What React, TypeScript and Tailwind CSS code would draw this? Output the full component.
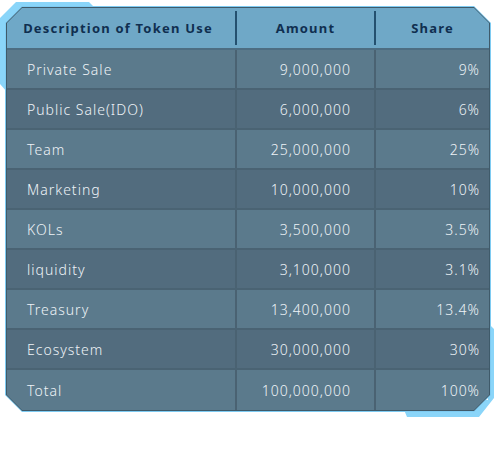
const rows = [
  { name: 'Private Sale', amount: '9,000,000', share: '9%' },
  { name: 'Public Sale(IDO)', amount: '6,000,000', share: '6%' },
  { name: 'Team', amount: '25,000,000', share: '25%' },
  { name: 'Marketing', amount: '10,000,000', share: '10%' },
  { name: 'KOLs', amount: '3,500,000', share: '3.5%' },
  { name: 'liquidity', amount: '3,100,000', share: '3.1%' },
  { name: 'Treasury', amount: '13,400,000', share: '13.4%' },
  { name: 'Ecosystem', amount: '30,000,000', share: '30%' },
  { name: 'Total', amount: '100,000,000', share: '100%' },
]

export default function App() {
  return (
    <div className="relative w-[500px] h-[475px] bg-white overflow-hidden [font-family:'Noto_Sans',sans-serif]">
      {/* light blue backdrop pieces */}
      <div className="absolute inset-0 bg-[#8ad5f9] [clip-path:polygon(0px_18px,16px_2px,89px_2px,97px_10px,97px_30px,7px_30px,7px_92px,0px_84px)]" />
      <div className="absolute inset-0 bg-[#8ad5f9] [clip-path:polygon(488px_323px,494px_329px,494px_398px,479px_417px,407px_417px,400px_400px,488px_400px)]" />

      <div className="relative ml-[5px] mt-[6px] w-[486px] bg-[#7ecbf2] p-px [clip-path:polygon(17px_0,469px_0,486px_17px,486px_389px,469px_406px,17px_406px,0_389px,0_17px)]">
        <div className="bg-[#3f5a6a] p-px [clip-path:polygon(16px_0,468px_0,484px_16px,484px_388px,468px_404px,16px_404px,0_388px,0_16px)]">
          <div className="[clip-path:polygon(15px_0,467px_0,482px_15px,482px_387px,467px_402px,15px_402px,0_387px,0_15px)]">
            <div className="grid grid-cols-[228px_139px_1fr] h-[42px] bg-[#6fa8c7] border-b-2 border-[#4d6d82] text-[13px] font-bold tracking-[1.2px] text-[#0f2f50]">
              <div className="flex items-center justify-center pr-[6px] pt-[2px]">Description of Token Use</div>
              <div className="flex items-center justify-center border-l-2 border-[#24506f] my-[3px] pt-[2px]">Amount</div>
              <div className="flex items-center justify-center border-l-2 border-[#24506f] my-[3px] pt-[2px]">Share</div>
            </div>
            {rows.map((r, i) => (
              <div
                key={r.name}
                className={`grid grid-cols-[228px_139px_1fr] h-[40px] text-[14px] font-light tracking-[1px] text-[#eef3f7] ${
                  i < rows.length - 1 ? 'border-b-2 border-[#4a6373]' : ''
                } ${i % 2 === 0 ? 'bg-[#5b7a8c]' : 'bg-[#526c7e]'}`}
              >
                <div className="flex items-center pl-[20px]">{r.name}</div>
                <div className="flex items-center justify-end pr-[23px] border-l-2 border-[#4a6272]">{r.amount}</div>
                <div className="flex items-center justify-end pr-[9px] border-l-2 border-[#4a6272]">{r.share}</div>
              </div>
            ))}
          </div>
        </div>
      </div>
    </div>
  )
}
